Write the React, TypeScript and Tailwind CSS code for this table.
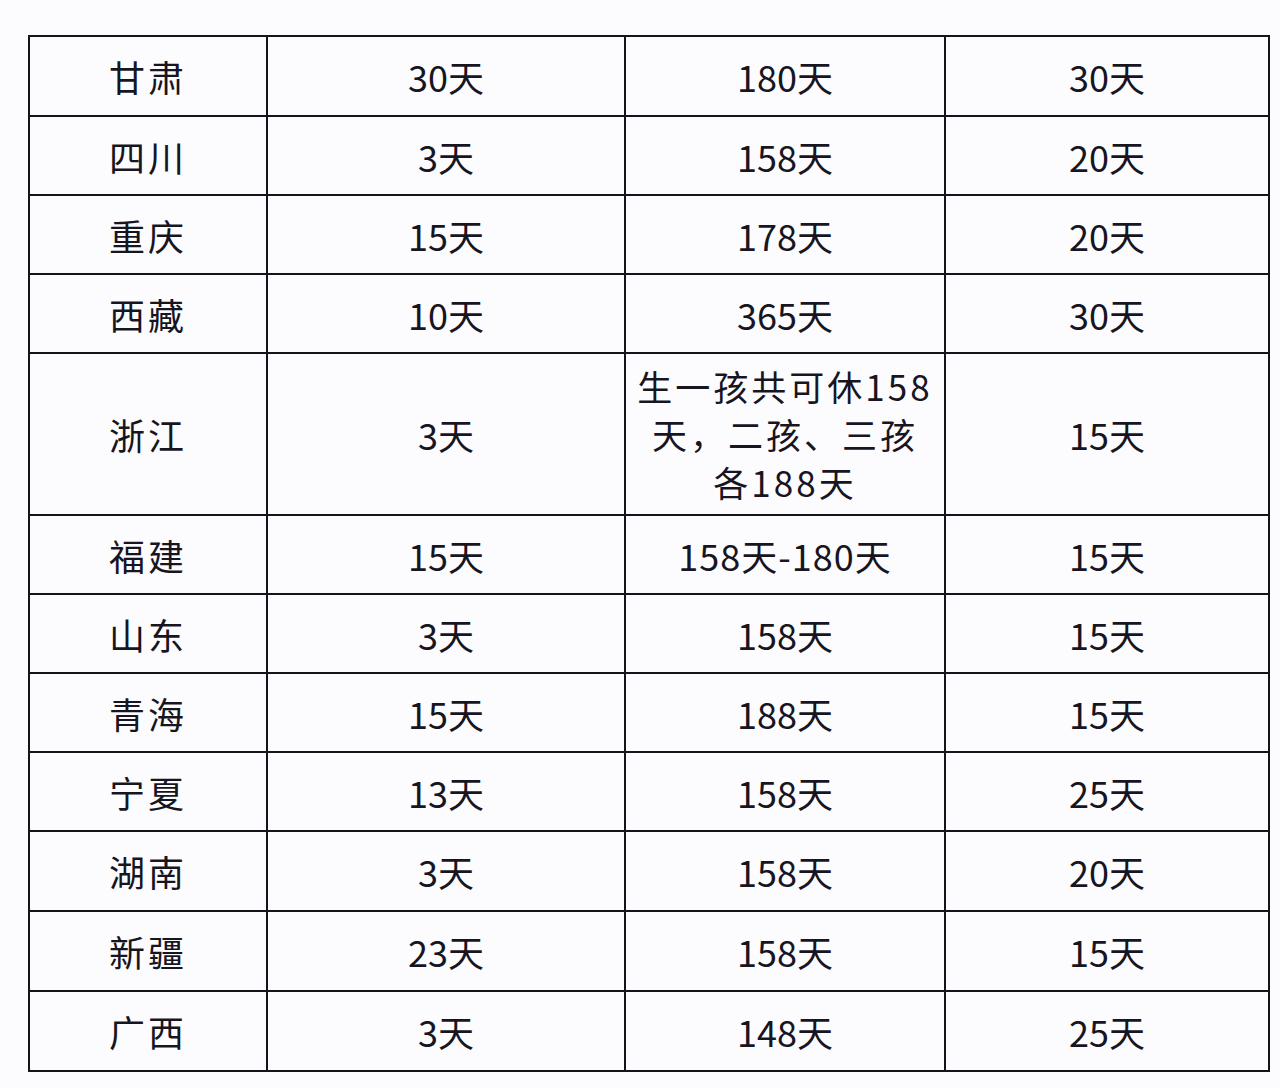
import React from 'react';

type Row = { name: string; a: string; b: React.ReactNode; c: string; h: string };

const rows: Row[] = [
  { name: '甘肃', a: '30天', b: '180天', c: '30天', h: 'h-[80px]' },
  { name: '四川', a: '3天', b: '158天', c: '20天', h: 'h-[79px]' },
  { name: '重庆', a: '15天', b: '178天', c: '20天', h: 'h-[79px]' },
  { name: '西藏', a: '10天', b: '365天', c: '30天', h: 'h-[79px]' },
  {
    name: '浙江',
    a: '3天',
    b: (
      <span className="block text-[35px] tracking-[3px] leading-[48px]">
        生一孩共可休158
        <br />
        天，二孩、三孩
        <br />
        各188天
      </span>
    ),
    c: '15天',
    h: 'h-[162px]',
  },
  { name: '福建', a: '15天', b: <span className="tracking-[1px]">158天-180天</span>, c: '15天', h: 'h-[79px]' },
  { name: '山东', a: '3天', b: '158天', c: '15天', h: 'h-[79px]' },
  { name: '青海', a: '15天', b: '188天', c: '15天', h: 'h-[79px]' },
  { name: '宁夏', a: '13天', b: '158天', c: '25天', h: 'h-[79px]' },
  { name: '湖南', a: '3天', b: '158天', c: '20天', h: 'h-[80px]' },
  { name: '新疆', a: '23天', b: '158天', c: '15天', h: 'h-[80px]' },
  { name: '广西', a: '3天', b: '148天', c: '25天', h: 'h-[80px]' },
];

const cell = 'border-2 border-[#15141c] text-center align-middle p-0';

export default function App() {
  return (
    <div
      className="w-[1280px] h-[1088px] bg-[#fcfcfe] pt-[35px] pl-[28px] text-[#17151f]"
      style={{ fontFamily: '"Noto Sans CJK SC", "Noto Sans", sans-serif' }}
    >
      <table className="border-collapse table-fixed w-[1240px] text-[36px] leading-none">
        <colgroup>
          <col className="w-[238px]" />
          <col className="w-[358px]" />
          <col className="w-[320px]" />
          <col className="w-[324px]" />
        </colgroup>
        <tbody>
          {rows.map((r) => (
            <tr key={r.name} className={r.h}>
              <td className={cell}>
                <span className="tracking-[3px]">{r.name}</span>
              </td>
              <td className={cell}>{r.a}</td>
              <td className={cell}>{r.b}</td>
              <td className={cell}>{r.c}</td>
            </tr>
          ))}
        </tbody>
      </table>
    </div>
  );
}
